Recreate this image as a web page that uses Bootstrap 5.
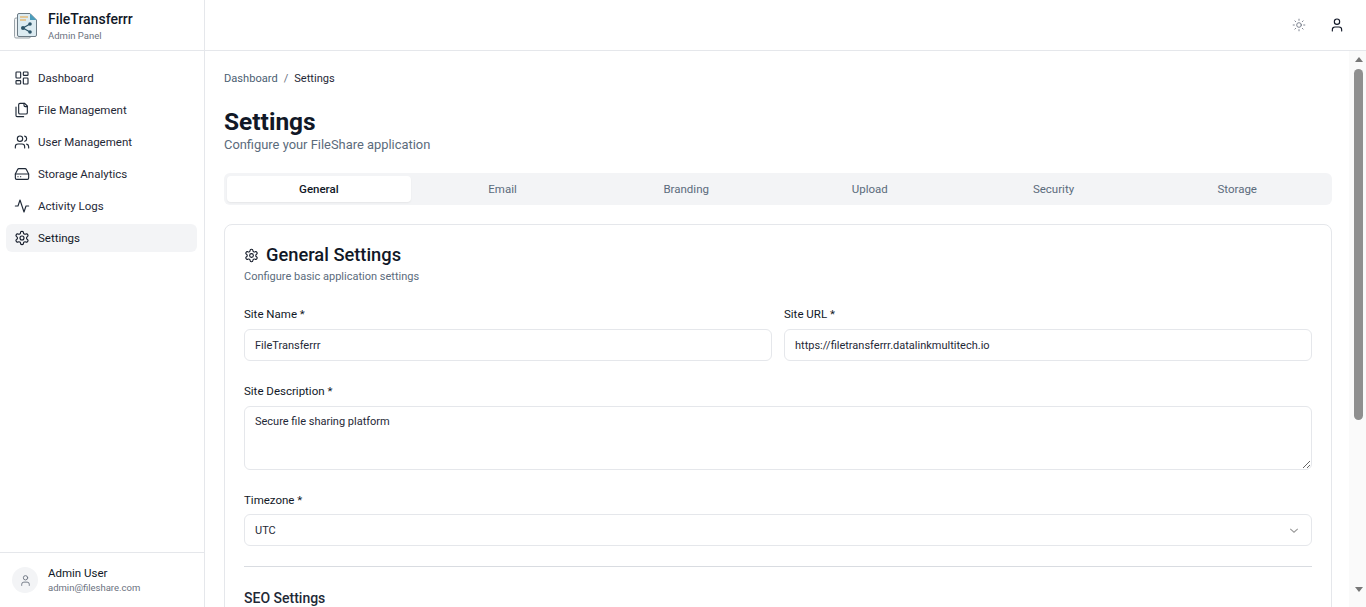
<!DOCTYPE html>
<html lang="en">
<head>
<meta charset="utf-8">
<title>Settings</title>
<link rel="stylesheet" href="https://cdn.jsdelivr.net/npm/bootstrap@5.3.0/dist/css/bootstrap.min.css">
<style>
html,body{height:100%;overflow:hidden}
body{font-family:Roboto,"Noto Sans",sans-serif;font-size:12px;color:#111827;background:#fff}
.app-side{width:205px;flex:none;border-right:1px solid #e5e7eb;height:607px}
.app-brand{height:51px;border-bottom:1px solid #e5e7eb;padding:1px 14px 0;gap:10px;flex:none}
.brand-name{font-size:14px;font-weight:500;line-height:18px;margin-top:2px}
.brand-sub{font-size:9.5px;line-height:14px;color:#6b7280;margin-top:1px}
.side-nav{padding:13px 7px 13px 6px;gap:4px}
.side-link{height:28px;padding:0 8px;gap:8px;border-radius:6px;color:#1f2937;font-size:11.5px;font-weight:400;text-decoration:none}
.side-text{padding-top:2px}
.side-link.on{background:#f3f4f6;color:#111827}
.ico{width:16px;height:16px;flex:none;fill:none;stroke:currentColor;stroke-width:1.7;stroke-linecap:round;stroke-linejoin:round}
.side-foot{border-top:1px solid #e5e7eb;height:55px;padding:0 12px;gap:10px;flex:none}
.avatar{width:26px;height:26px;background:#f3f4f6;color:#6b7280;border-radius:50%}
.avatar .ico{width:13px;height:13px}
.foot-name{font-size:11.5px;font-weight:400;line-height:14px}
.foot-mail{font-size:9.5px;line-height:14px;color:#6b7280;margin-top:1px}
.app-top{height:51px;flex:none;border-bottom:1px solid #e5e7eb;padding-right:21px;gap:23px}
.top-sun{width:14px;height:14px;stroke-width:1.5;color:#6b7280}
.main-wrap{height:556px;overflow:hidden}
.app-main{overflow:hidden;padding:0 17px 0 19px;height:556px;min-width:0}
.fake-bar{width:17px;flex:none;height:556px;background:#fafafa;padding:6px 3px 6px 5px}
.bar-up{width:0;height:0;margin:0 auto;border:solid transparent;border-width:0 4.5px 5px;border-bottom-color:#777}
.bar-down{width:0;height:0;margin:167px auto 0;border:solid transparent;border-width:5px 4.5px 0;border-top-color:#777}
.bar-thumb{height:351px;background:#8f8f8f;border-radius:5px;margin-top:7px}
.crumbs{padding-top:20px;height:33px;font-size:11.1px;line-height:16px;margin:0;--bs-breadcrumb-divider-color:#6b7280;--bs-breadcrumb-item-padding-x:6px}
.crumbs a{color:#4b6072;text-decoration:none}
.crumbs .active{color:#1f2937}
.page-title{font-size:24.5px;font-weight:700;line-height:28px;margin:24px 0 0;color:#111827}
.page-sub{font-size:12.9px;line-height:16px;color:#5b6b7c;margin:1px 0 0}
.tab-bar{background:#f3f4f6;border-radius:6px;height:32px;padding:3px;margin-top:20px;flex-wrap:nowrap}
.tab-item{flex:1 1 0;min-width:0}
.tab-bar .nav-link{width:100%;height:26px;padding:1px 0 0;font-size:11.5px;font-weight:400;color:#5b6b7c;border:0;border-radius:4px;background:none}
.tab-bar .nav-link.active{background:#fff;color:#111827;font-weight:500;box-shadow:0 1px 2px rgba(0,0,0,.06)}
.set-card{margin-top:19px;border:1px solid #e5e7eb;border-radius:8px;padding:19px}
.set-title{font-size:18.3px;font-weight:500;line-height:22px;margin:0;gap:7px;color:#111827}
.set-title .ico{width:15px;height:15px}
.set-sub{font-size:11px;line-height:14px;color:#5b6b7c;margin:4px 0 0}
.fld-label{display:block;font-size:11.5px;font-weight:400;line-height:14px;margin:0 0 8px;color:#111827}
.fld{font-size:11px;line-height:14px;padding:8px 10px;height:32px;border:1px solid #e5e7eb;border-radius:6px;color:#1f2937}
textarea.fld{height:64px;min-height:64px}
select.fld{padding-top:9px;padding-bottom:7px;background-image:url("data:image/svg+xml,%3Csvg xmlns='http://www.w3.org/2000/svg' viewBox='0 0 12 8'%3E%3Cpath d='M1.5 2 6 6l4.5-4' fill='none' stroke='%23999' stroke-width='1.3'/%3E%3C/svg%3E");background-size:10px 7px;background-position:right 12px center}
.fld-row{--bs-gutter-x:12px;--bs-gutter-y:0;margin-top:23px}
.fld-stack{margin-top:23px}
.fld-tz .fld-label{margin-bottom:7px}
.fld-rule{margin:20px 0 22px;border-color:#d9dce1;opacity:1}
.seo-title{font-size:14px;font-weight:500;line-height:18px;margin:0;color:#1f2937}
</style>
</head>
<body>
<svg width="0" height="0" class="position-absolute">
<symbol id="i-dash" viewBox="0 0 24 24"><rect x="3" y="3" width="7" height="9" rx="1"/><rect x="14" y="3" width="7" height="5" rx="1"/><rect x="14" y="12" width="7" height="9" rx="1"/><rect x="3" y="16" width="7" height="5" rx="1"/></symbol>
<symbol id="i-files" viewBox="0 0 24 24"><path d="M20 7h-3a2 2 0 0 1-2-2V2"/><path d="M9 18a2 2 0 0 1-2-2V4a2 2 0 0 1 2-2h7l4 4v10a2 2 0 0 1-2 2Z"/><path d="M3 7.6v12.8A1.6 1.6 0 0 0 4.6 22h9.8"/></symbol>
<symbol id="i-users" viewBox="0 0 24 24"><path d="M16 21v-2a4 4 0 0 0-4-4H6a4 4 0 0 0-4 4v2"/><circle cx="9" cy="7" r="4"/><path d="M22 21v-2a4 4 0 0 0-3-3.87"/><path d="M16 3.13a4 4 0 0 1 0 7.75"/></symbol>
<symbol id="i-drive" viewBox="0 0 24 24"><path d="M22 12H2"/><path d="M5.45 5.11 2 12v6a2 2 0 0 0 2 2h16a2 2 0 0 0 2-2v-6l-3.45-6.89A2 2 0 0 0 16.76 4H7.24a2 2 0 0 0-1.79 1.11z"/><path d="M6 16h.01"/><path d="M10 16h.01"/></symbol>
<symbol id="i-act" viewBox="0 0 24 24"><path d="M22 12h-4l-3 9L9 3l-3 9H2"/></symbol>
<symbol id="i-gear" viewBox="0 0 24 24"><path d="M12.22 2h-.44a2 2 0 0 0-2 2v.18a2 2 0 0 1-1 1.73l-.43.25a2 2 0 0 1-2 0l-.15-.08a2 2 0 0 0-2.73.73l-.22.38a2 2 0 0 0 .73 2.73l.15.1a2 2 0 0 1 1 1.72v.51a2 2 0 0 1-1 1.74l-.15.09a2 2 0 0 0-.73 2.73l.22.38a2 2 0 0 0 2.73.73l.15-.08a2 2 0 0 1 2 0l.43.25a2 2 0 0 1 1 1.73V20a2 2 0 0 0 2 2h.44a2 2 0 0 0 2-2v-.18a2 2 0 0 1 1-1.73l.43-.25a2 2 0 0 1 2 0l.15.08a2 2 0 0 0 2.73-.73l.22-.39a2 2 0 0 0-.73-2.73l-.15-.08a2 2 0 0 1-1-1.74v-.5a2 2 0 0 1 1-1.74l.15-.09a2 2 0 0 0 .73-2.73l-.22-.38a2 2 0 0 0-2.73-.73l-.15.08a2 2 0 0 1-2 0l-.43-.25a2 2 0 0 1-1-1.73V4a2 2 0 0 0-2-2z"/><circle cx="12" cy="12" r="3"/></symbol>
<symbol id="i-sun" viewBox="0 0 24 24"><circle cx="12" cy="12" r="4"/><path d="M12 2v2M12 20v2M4.93 4.93l1.41 1.41M17.66 17.66l1.41 1.41M2 12h2M20 12h2M6.34 17.66l-1.41 1.41M19.07 4.93l-1.41 1.41"/></symbol>
<symbol id="i-user" viewBox="0 0 24 24"><path d="M19 21v-2a4 4 0 0 0-4-4H9a4 4 0 0 0-4 4v2"/><circle cx="12" cy="7" r="4"/></symbol>
</svg>
<div class="d-flex">
  <aside class="app-side d-flex flex-column">
    <div class="app-brand d-flex align-items-center">
      <svg width="24" height="28" viewBox="0 0 24 28">
        <path d="M3 6H2a1.5 1.5 0 0 0-1.5 1.5v17A1.5 1.5 0 0 0 2 26h13a1.5 1.5 0 0 0 1.5-1.5V24" fill="#f1f3f4" stroke="#9aa3a9" stroke-width="1"/>
        <path d="M5 1.5h11l6.5 6.5v15a1.5 1.5 0 0 1-1.5 1.5H5A1.5 1.5 0 0 1 3.5 23V3A1.5 1.5 0 0 1 5 1.5z" fill="#dcebf1" stroke="#6b7a84" stroke-width="1"/>
        <path d="M16 1.5V8h6.5z" fill="#4a9cbb"/>
        <path d="M6 5h8M6 8h6" stroke="#e8a13c" stroke-width="1.2"/>
        <path d="M9 16l7-4M9 16l7 4" stroke="#2c5468" stroke-width="1.2" fill="none"/>
        <circle cx="9" cy="16" r="2" fill="#2c5468"/><circle cx="16" cy="12" r="1.8" fill="#2c5468"/><circle cx="16" cy="20" r="1.8" fill="#2c5468"/>
      </svg>
      <div>
        <div class="brand-name">FileTransferrr</div>
        <div class="brand-sub">Admin Panel</div>
      </div>
    </div>
    <nav class="side-nav d-flex flex-column flex-grow-1">
      <a class="side-link d-flex align-items-center" href="#"><svg class="ico"><use href="#i-dash"/></svg><span class="side-text">Dashboard</span></a>
      <a class="side-link d-flex align-items-center" href="#"><svg class="ico"><use href="#i-files"/></svg><span class="side-text">File Management</span></a>
      <a class="side-link d-flex align-items-center" href="#"><svg class="ico"><use href="#i-users"/></svg><span class="side-text">User Management</span></a>
      <a class="side-link d-flex align-items-center" href="#"><svg class="ico"><use href="#i-drive"/></svg><span class="side-text">Storage Analytics</span></a>
      <a class="side-link d-flex align-items-center" href="#"><svg class="ico"><use href="#i-act"/></svg><span class="side-text">Activity Logs</span></a>
      <a class="side-link on d-flex align-items-center" href="#"><svg class="ico"><use href="#i-gear"/></svg><span class="side-text">Settings</span></a>
    </nav>
    <div class="side-foot d-flex align-items-center">
      <span class="avatar d-flex align-items-center justify-content-center"><svg class="ico"><use href="#i-user"/></svg></span>
      <div>
        <div class="foot-name">Admin User</div>
        <div class="foot-mail">admin@fileshare.com</div>
      </div>
    </div>
  </aside>
  <div class="flex-grow-1 d-flex flex-column" style="min-width:0">
    <header class="app-top d-flex align-items-center justify-content-end">
      <svg class="ico top-sun"><use href="#i-sun"/></svg>
      <svg class="ico"><use href="#i-user"/></svg>
    </header>
    <div class="main-wrap d-flex">
      <main class="app-main flex-grow-1">
        <ol class="breadcrumb crumbs">
          <li class="breadcrumb-item"><a href="#">Dashboard</a></li>
          <li class="breadcrumb-item active">Settings</li>
        </ol>
        <h1 class="page-title">Settings</h1>
        <p class="page-sub">Configure your FileShare application</p>
        <ul class="nav tab-bar">
          <li class="tab-item"><button class="nav-link active">General</button></li>
          <li class="tab-item"><button class="nav-link">Email</button></li>
          <li class="tab-item"><button class="nav-link">Branding</button></li>
          <li class="tab-item"><button class="nav-link">Upload</button></li>
          <li class="tab-item"><button class="nav-link">Security</button></li>
          <li class="tab-item"><button class="nav-link">Storage</button></li>
        </ul>
        <section class="set-card">
          <h2 class="set-title d-flex align-items-center"><svg class="ico"><use href="#i-gear"/></svg>General Settings</h2>
          <p class="set-sub">Configure basic application settings</p>
          <div class="row fld-row">
            <div class="col-6">
              <label class="fld-label">Site Name *</label>
              <input class="form-control fld" value="FileTransferrr">
            </div>
            <div class="col-6">
              <label class="fld-label">Site URL *</label>
              <input class="form-control fld" value="https://filetransferrr.datalinkmultitech.io">
            </div>
          </div>
          <div class="fld-stack">
            <label class="fld-label">Site Description *</label>
            <textarea class="form-control fld">Secure file sharing platform</textarea>
          </div>
          <div class="fld-stack fld-tz">
            <label class="fld-label">Timezone *</label>
            <select class="form-select fld"><option>UTC</option></select>
          </div>
          <hr class="fld-rule">
          <h3 class="seo-title">SEO Settings</h3>
        </section>
      </main>
      <div class="fake-bar" aria-hidden="true">
        <div class="bar-up"></div>
        <div class="bar-thumb"></div>
        <div class="bar-down"></div>
      </div>
    </div>
  </div>
</div>
<script src="https://cdn.jsdelivr.net/npm/bootstrap@5.3.0/dist/js/bootstrap.bundle.min.js"></script>
</body>
</html>
